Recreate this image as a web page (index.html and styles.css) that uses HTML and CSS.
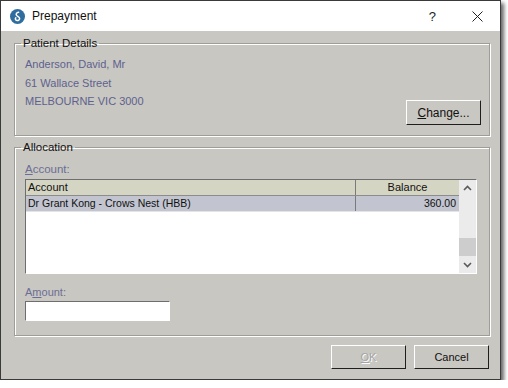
FILE: index.html
```html
<!DOCTYPE html>
<html lang="en">

<head>
    <meta charset="UTF-8">
    <title>Prepayment</title>
    <link rel="stylesheet" href="styles.css">
</head>

<body>
    <div class="window">
        <div class="titlebar">
            <svg class="app-icon" width="15" height="15" viewBox="0 0 15 15">
                <circle cx="7.5" cy="7.5" r="7.5" fill="#2f6d9f" />
                <path d="M8.6 3.2 C6.6 3.4 5.6 5 6.6 6.4 C7.4 7.4 9.4 7.6 9.6 9.3 C9.8 11 8 12 6.6 11.4 C5.4 10.9 5 9.6 5.8 8.8"
                    fill="none" stroke="#fff" stroke-width="1.5" stroke-linecap="round" />
            </svg>
            <span class="title">Prepayment</span>
            <span class="title-help">?</span>
            <svg class="title-close" width="11" height="11" viewBox="0 0 11 11">
                <path d="M0.5 0.5 L10.5 10.5 M10.5 0.5 L0.5 10.5" stroke="#222" stroke-width="1" />
            </svg>
        </div>

        <div class="content">
            <fieldset class="group">
                <legend>Patient Details</legend>
                <div class="patient">
                    <div class="address">
                        <div>Anderson, David, Mr</div>
                        <div>61 Wallace Street</div>
                        <div>MELBOURNE VIC 3000</div>
                    </div>
                    <button class="btn btn-change"><u>C</u>hange...</button>
                </div>
            </fieldset>

            <fieldset class="group group-alloc">
                <legend>Allocation</legend>
                <div class="alloc">
                    <div class="field-label"><u>A</u>ccount:</div>
                    <div class="listview">
                        <div class="list-main">
                            <div class="list-row list-head">
                                <div class="col-account">Account</div>
                                <div class="col-balance">Balance</div>
                            </div>
                            <div class="list-row list-selected">
                                <div class="col-account">Dr Grant Kong - Crows Nest (HBB)</div>
                                <div class="col-balance num">360.00</div>
                            </div>
                        </div>
                        <div class="scrollbar">
                            <svg class="arrow" width="17" height="17" viewBox="0 0 17 17">
                                <path d="M5 10 L8.5 6.5 L12 10" fill="none" stroke="#5a5a5a" stroke-width="1.6" />
                            </svg>
                            <div class="track">
                                <div class="thumb"></div>
                            </div>
                            <svg class="arrow" width="17" height="17" viewBox="0 0 17 17">
                                <path d="M5 7 L8.5 10.5 L12 7" fill="none" stroke="#5a5a5a" stroke-width="1.6" />
                            </svg>
                        </div>
                    </div>
                    <div class="field-label label-amount">A<u>m</u>ount:</div>
                    <input type="text" class="amount">
                </div>
            </fieldset>

            <div class="actions">
                <button class="btn btn-disabled"><u>O</u>K</button>
                <button class="btn">Cancel</button>
            </div>
        </div>
    </div>
</body>

</html>
```

FILE: styles.css
```css
body {
    margin: 0;
    padding: 0;
    background-color: #fff;
    font-family: "Liberation Sans", Arial, sans-serif;
    font-size: 11px;
}

.window {
    width: 499px;
    height: 378px;
    border: 1px solid #3a3a3a;
    background-color: #c9c7c1;
    box-shadow: 3px 3px 4px rgba(0, 0, 0, 0.6);
    display: flex;
    flex-direction: column;
}

.titlebar {
    height: 30px;
    background-color: #fff;
    display: flex;
    align-items: center;
}

.app-icon {
    margin-left: 9px;
    margin-top: 1px;
}

.title {
    margin-left: 7px;
    font-size: 12px;
    color: #111;
    flex-grow: 1;
}

.title-help {
    font-size: 13px;
    color: #222;
    margin-right: 36px;
}

.title-close {
    margin-right: 17px;
}

.content {
    padding: 5px 10px 0 13px;
}

.group {
    margin: 0;
    padding: 0;
    border: 1px solid #9e9d98;
    box-shadow: inset 1px 1px 0 #fff, 1px 1px 0 #fff;
}

.group legend {
    margin-left: 6px;
    padding: 0 2px;
    font-size: 11.5px;
    line-height: 14px;
    color: #111;
}

.patient {
    display: flex;
    padding: 5px 8px 10px 10px;
}

.address {
    flex-grow: 1;
    color: #5d6290;
    line-height: 18.5px;
    padding-bottom: 14.5px;
}

.btn {
    width: 75px;
    height: 24px;
    padding: 0;
    background-color: #c9c7c1;
    border: 1px solid;
    border-color: #fff #1e1e1e #1e1e1e #fff;
    font-family: "Liberation Sans", Arial, sans-serif;
    font-size: 11px;
    color: #111;
}

.btn-change {
    align-self: flex-end;
    height: 25px;
    font-size: 12px;
}

.btn-disabled {
    color: #a4a4a4;
    text-shadow: 1px 1px 0 #fff;
}

.group-alloc {
    margin-top: 4px;
}

.alloc {
    padding: 8px 11px 14px 10px;
}

.field-label {
    color: #6a6e96;
    line-height: 14px;
    margin-bottom: 3px;
    font-size: 11.5px;
}

.label-amount {
    margin-top: 11px;
    margin-bottom: 2px;
    font-size: 11px;
}

.listview {
    display: flex;
    width: 450px;
    height: 93px;
    border: 1px solid;
    border-color: #6e6e6e #fff #fff #6e6e6e;
    background-color: #fff;
}

.list-main {
    flex-grow: 1;
}

.list-row {
    display: flex;
    height: 15px;
    line-height: 15px;
    color: #111;
    font-size: 11px;
}

.list-head {
    background-color: #d5d5c3;
    border-bottom: 1px solid #8c8c8c;
}

.list-selected {
    background-color: #c2c5cf;
    border-bottom: 1px solid #e4e4e4;
    font-size: 10.5px;
}

.col-account {
    width: 327px;
    padding-left: 2px;
    border-right: 1px solid #7a7a7a;
}

.col-balance {
    flex-grow: 1;
    text-align: center;
}

.col-balance.num {
    text-align: right;
    padding-right: 3px;
}

.scrollbar {
    width: 17px;
    background-color: #ebebeb;
    display: flex;
    flex-direction: column;
}

.arrow {
    display: block;
}

.track {
    flex-grow: 1;
    display: flex;
    flex-direction: column;
    justify-content: flex-end;
}

.thumb {
    height: 18px;
    background-color: #cdcdcd;
}

.amount {
    display: block;
    width: 143px;
    height: 18px;
    margin: 0;
    padding: 0;
    border: 1px solid;
    border-color: #6e6e6e #fff #fff #6e6e6e;
    background-color: #fff;
}

.actions {
    display: flex;
    justify-content: flex-end;
    gap: 8px;
    margin-top: 9px;
    padding-right: 1px;
}
```
